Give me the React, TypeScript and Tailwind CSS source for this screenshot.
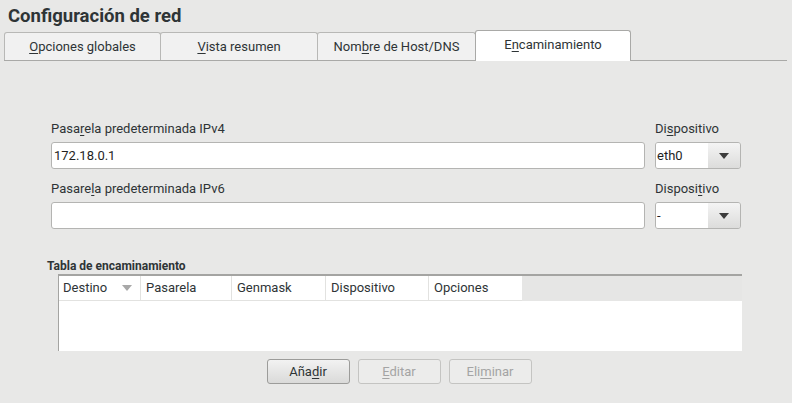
import React from "react";

const U = ({ children }: { children: React.ReactNode }) => (
  <span className="underline decoration-1 underline-offset-2">{children}</span>
);

function Tab({ children, active, w }: { children: React.ReactNode; active?: boolean; w: string }) {
  if (active) {
    return (
      <div
        className={`${w} h-[31px] -mb-px -ml-px relative z-10 flex items-center justify-center bg-white border border-b-0 border-[#a9a9a7] rounded-t-[3px] text-[13px] text-[#2e3436] pb-[3px]`}
      >
        {children}
      </div>
    );
  }
  return (
    <div
      className={`${w} h-[28px] flex items-center justify-center bg-[#f1f1f1] border border-b-0 border-[#b8b8b6] rounded-t-[3px] text-[13px] text-[#2e3436] -ml-px first:ml-0`}
    >
      {children}
    </div>
  );
}

function Combo({ value }: { value: string }) {
  return (
    <div className="w-[86px] h-[27px] flex border border-[#b4b4b2] rounded-[3px] overflow-hidden">
      <div className="flex-1 bg-white text-[13px] text-[#1f1f1f] flex items-center pl-[1px]">{value}</div>
      <div className="w-[32px] bg-gradient-to-b from-[#f4f4f4] to-[#dcdcdb] flex items-center justify-center">
        <svg width="10" height="6" viewBox="0 0 10 6">
          <path d="M0 0 L10 0 L5 6 Z" fill="#3c3c3c" />
        </svg>
      </div>
    </div>
  );
}

function Btn({ children, disabled }: { children: React.ReactNode; disabled?: boolean }) {
  return (
    <div
      className={`w-[83px] h-[25px] flex items-center justify-center rounded-[3px] text-[13px] border ${
        disabled
          ? "border-[#c4c4c2] bg-[#ececeb] text-[#a4a4a4]"
          : "border-[#9c9c9a] bg-gradient-to-b from-[#f2f2f2] to-[#dadad9] text-[#2e3436]"
      }`}
    >
      {children}
    </div>
  );
}

export default function App() {
  return (
    <div
      className="w-[792px] h-[403px] bg-[#e8e8e7] overflow-hidden text-[#2e3436]"
      style={{ fontFamily: "Roboto, 'Noto Sans', sans-serif" }}
    >
      <div className="pl-[8px] pt-[4px] h-[33px] text-[18.5px] font-bold leading-[24px] text-[#2e3436]">
        Configuración de red
      </div>
      <div className="pl-[4px] pr-[5px]">
        <div className="flex items-end border-b border-[#a9a9a7] h-[28px]">
          <Tab w="w-[157px]">
            <span><U>O</U>pciones globales</span>
          </Tab>
          <Tab w="w-[158px]">
            <span><U>V</U>ista resumen</span>
          </Tab>
          <Tab w="w-[159px]">
            <span>Nom<U>b</U>re de Host/DNS</span>
          </Tab>
          <Tab w="w-[156px]" active>
            <span>E<U>n</U>caminamiento</span>
          </Tab>
        </div>
      </div>

      <div className="pl-[51px] pr-[51px] pt-[59px]">
        <div className="flex gap-[10px]">
          <div className="flex-1">
            <div className="text-[13px] leading-[17px] h-[22px] text-[#2e3436]">
              Pasa<U>r</U>ela predeterminada IPv4
            </div>
            <div className="h-[27px] bg-white border border-[#b4b4b2] rounded-[3px] flex items-center pl-[2px] text-[13px] text-[#1f1f1f]">
              172.18.0.1
            </div>
          </div>
          <div className="w-[86px]">
            <div className="text-[13px] leading-[17px] h-[22px]">
              Di<U>s</U>positivo
            </div>
            <Combo value="eth0" />
          </div>
        </div>
        <div className="flex gap-[10px] mt-[11px]">
          <div className="flex-1">
            <div className="text-[13px] leading-[17px] h-[22px] text-[#2e3436]">
              Pasare<U>l</U>a predeterminada IPv6
            </div>
            <div className="h-[27px] bg-white border border-[#b4b4b2] rounded-[3px]" />
          </div>
          <div className="w-[86px]">
            <div className="text-[13px] leading-[17px] h-[22px]">
              Disposi<U>t</U>ivo
            </div>
            <Combo value="-" />
          </div>
        </div>
      </div>

      <div className="pl-[47px] pt-[29px]">
        <div className="text-[12px] font-bold leading-[16px] text-[#2e3436]">Tabla de encaminamiento</div>
      </div>
      <div className="ml-[58px] w-[684px] h-[77px] border-t-2 border-l border-[#a4a4a2] bg-white flex flex-col">
        <div className="flex h-[25px] bg-[#e6e6e5] text-[13px] text-[#2e3436]">
          <div className="w-[82px] bg-white border-r border-b border-[#e2e2e0] flex items-center pl-[4px] justify-between pr-[8px]">
            <span>Destino</span>
            <svg width="10" height="6" viewBox="0 0 10 6">
              <path d="M0 0 L10 0 L5 6 Z" fill="#a8a8a8" />
            </svg>
          </div>
          <div className="w-[91px] bg-white border-r border-b border-[#e2e2e0] flex items-center pl-[5px]">Pasarela</div>
          <div className="w-[94px] bg-white border-r border-b border-[#e2e2e0] flex items-center pl-[5px]">Genmask</div>
          <div className="w-[103px] bg-white border-r border-b border-[#e2e2e0] flex items-center pl-[5px]">Dispositivo</div>
          <div className="w-[93px] bg-white border-b border-[#e2e2e0] flex items-center pl-[5px]">Opciones</div>
          <div className="flex-1 mr-[1px]" />
        </div>
        <div className="flex-1 bg-white" />
      </div>

      <div className="flex justify-center gap-[8px] mt-[8px] pl-[6px]">
        <Btn>
          <span>Aña<U>d</U>ir</span>
        </Btn>
        <Btn disabled>
          <span><U>E</U>ditar</span>
        </Btn>
        <Btn disabled>
          <span>Eli<U>m</U>inar</span>
        </Btn>
      </div>
    </div>
  );
}
